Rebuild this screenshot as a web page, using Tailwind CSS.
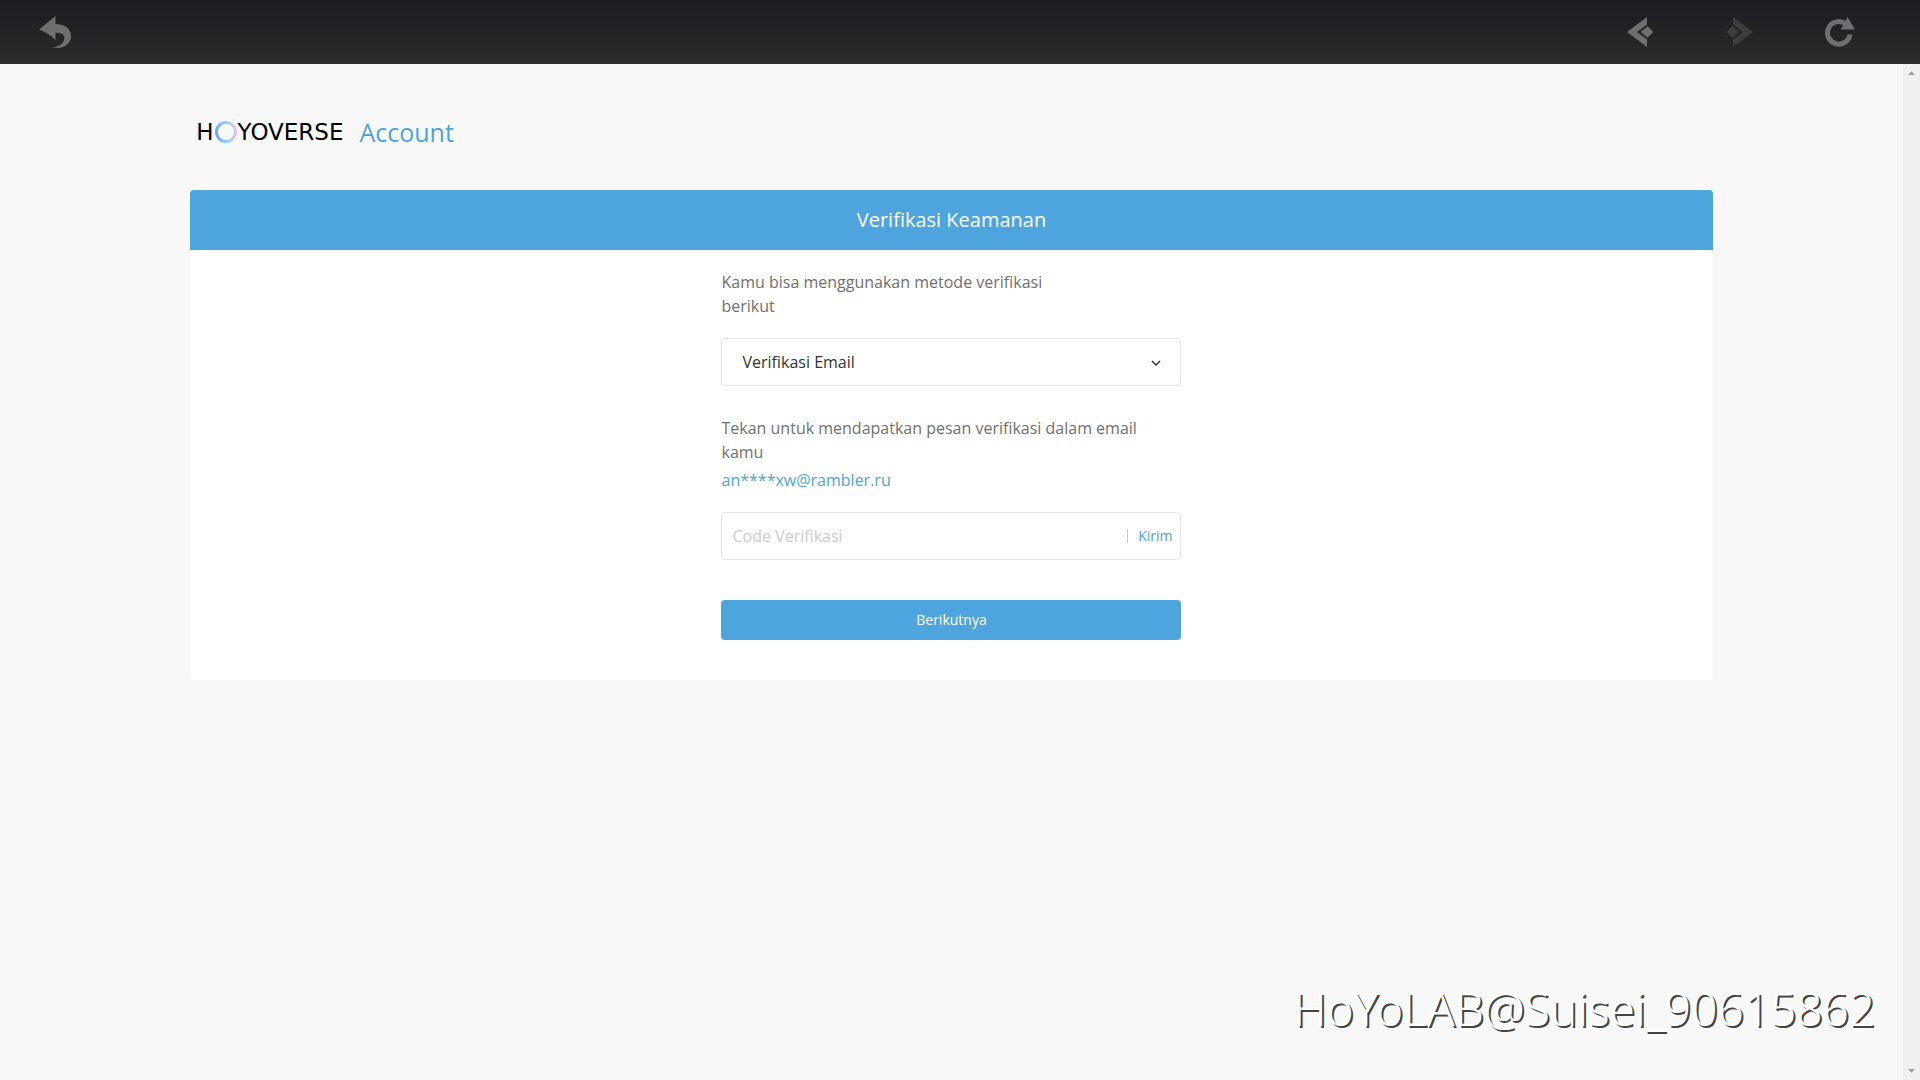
<!DOCTYPE html>
<html lang="id">
<head>
  <meta charset="UTF-8" />
  <meta name="viewport" content="width=device-width, initial-scale=1.0" />
  <title>HoYoverse Account - Verifikasi Keamanan</title>
  <script src="https://cdn.jsdelivr.net/npm/@tailwindcss/browser@4"></script>
</head>
<body class="h-screen flex flex-col bg-[#f8f8f8] font-['Open_Sans','Noto_Sans',sans-serif] text-base leading-6 text-[#333] overflow-hidden">

  <!-- In-game browser bar -->
  <header class="h-16 shrink-0 flex items-center justify-between pl-[39px] pr-[65px] bg-linear-to-b from-[#1e1c23] via-[#222325] to-[#2b2d2d] text-[#6f6f70]">
    <button type="button" aria-label="Back to game">
      <svg class="block" width="32" height="32" viewBox="0 0 32 32" fill="currentColor"><path d="M0 13.500L16.500 0V8C25 8 32 12 32 20C32 27.500 25.500 32 18 32C16 32 14 31.800 12.500 31.500C20 31 25.500 27 25.500 22C25.500 18 21.500 16.500 16.500 16.700V24C11.500 19 5.500 15.500 0 13.500Z"/></svg>
    </button>
    <nav class="flex items-center gap-[72px]">
      <button type="button" aria-label="Previous page">
        <svg class="block" width="27" height="30" viewBox="0 0 27 30" fill="currentColor"><path d="M0 15L20 0V7.500L10 15L20 22.500V30Z"/><path d="M13 15L20.500 8.800L27 15L20.500 21.200Z" stroke="#242527" stroke-width="1"/></svg>
      </button>
      <button type="button" aria-label="Next page" class="text-[#3c3d3e]" disabled>
        <svg class="block" width="27" height="30" viewBox="0 0 27 30" fill="currentColor"><path d="M27 15L7 0V7.500L17 15L7 22.500V30Z"/><path d="M14 15L6.500 8.800L0 15L6.500 21.200Z" stroke="#242527" stroke-width="1"/></svg>
      </button>
      <button type="button" aria-label="Reload">
        <svg class="block" width="30" height="30" viewBox="0 0 30 30"><path d="M20.500 6.800A11.300 11.300 0 1 0 25 17.500" fill="none" stroke="currentColor" stroke-width="5"/><path d="M22.500 0L30 12.500H15.500L18.200 8.500L17.500 4L20 4.500Z" fill="currentColor"/></svg>
      </button>
    </nav>
  </header>

  <div class="flex-1 flex min-h-0">
    <main class="flex-1 relative">
      <div class="w-4/5 mx-auto">
        <div class="h-[126px] flex items-center pl-1.5 pb-2 pt-[18px]">
          <a href="#" class="flex items-center text-black font-['DejaVu_Sans',sans-serif] text-[23px]">
            H<svg class="block" width="24" height="24" viewBox="0 0 24 24" fill="none">
              <defs>
                <linearGradient id="ring" x1="0" y1="0.700" x2="1" y2="0.600">
                  <stop offset="0" stop-color="#6fa8fb"/>
                  <stop offset="0.500" stop-color="#8fd0fa"/>
                  <stop offset="1" stop-color="#d9c4fb"/>
                </linearGradient>
              </defs>
              <circle cx="12" cy="12" r="9.500" stroke="url(#ring)" stroke-width="3"/>
            </svg>YOVERSE
          </a>
          <span class="ml-4 text-[25px] text-[#4ea4dc]">Account</span>
        </div>

        <section class="bg-white rounded overflow-hidden pb-10">
          <h1 class="h-[60px] flex items-center justify-center bg-[#4ea4dc] text-white text-xl">Verifikasi Keamanan</h1>
          <form class="w-[460px] mx-auto pt-5 text-[#707070]" onsubmit="return false">
            <label for="method" class="block w-3/4 mb-5">Kamu bisa menggunakan metode verifikasi berikut</label>
            <div class="relative">
              <select id="method" class="block w-full h-12 pl-5 pr-10 appearance-none border border-[#e5e5e5] rounded bg-white text-[#333]">
                <option>Verifikasi Email</option>
              </select>
              <svg class="absolute right-5 top-5 pointer-events-none" width="10" height="10" viewBox="0 0 10 10" fill="none" stroke="#333" stroke-width="1.500"><path d="M1 3L5 7L9 3"/></svg>
            </div>

            <label for="code" class="block mt-[30px]">Tekan untuk mendapatkan pesan verifikasi dalam email kamu</label>
            <p class="mt-1 text-[#4ea4dc]">an****xw@rambler.ru</p>
            <div class="mt-5 h-12 flex items-center border border-[#e5e5e5] rounded pl-2.5 pr-2">
              <input id="code" type="text" placeholder="Code Verifikasi" class="flex-1 min-w-0 outline-none placeholder:text-[#ccc]" />
              <span class="w-px h-3.5 bg-[#ccc]"></span>
              <button type="button" class="pl-2.5 text-sm text-[#4ea4dc]">Kirim</button>
            </div>

            <button type="submit" class="block w-full h-10 mt-10 rounded bg-[#4ea4dc] text-white text-sm">Berikutnya</button>
          </form>
        </section>
      </div>

      <!-- Uploader watermark -->
      <p class="absolute right-7 bottom-10 text-[46px] leading-[64px] font-light text-white font-['Noto_Sans','Open_Sans',sans-serif] [text-shadow:2px_2px_0_#444]">HoYoLAB@Suisei_90615862</p>
    </main>

    <!-- Scroll track -->
    <div class="w-[17px] flex flex-col justify-between items-center py-[7px] bg-[#f0f0f0] text-[#a3a3a3]">
      <svg width="7" height="4" viewBox="0 0 7 4" fill="currentColor"><path d="M0 4L3.500 0L7 4Z"/></svg>
      <svg width="7" height="4" viewBox="0 0 7 4" fill="currentColor"><path d="M0 0L3.500 4L7 0Z"/></svg>
    </div>
  </div>

</body>
</html>
